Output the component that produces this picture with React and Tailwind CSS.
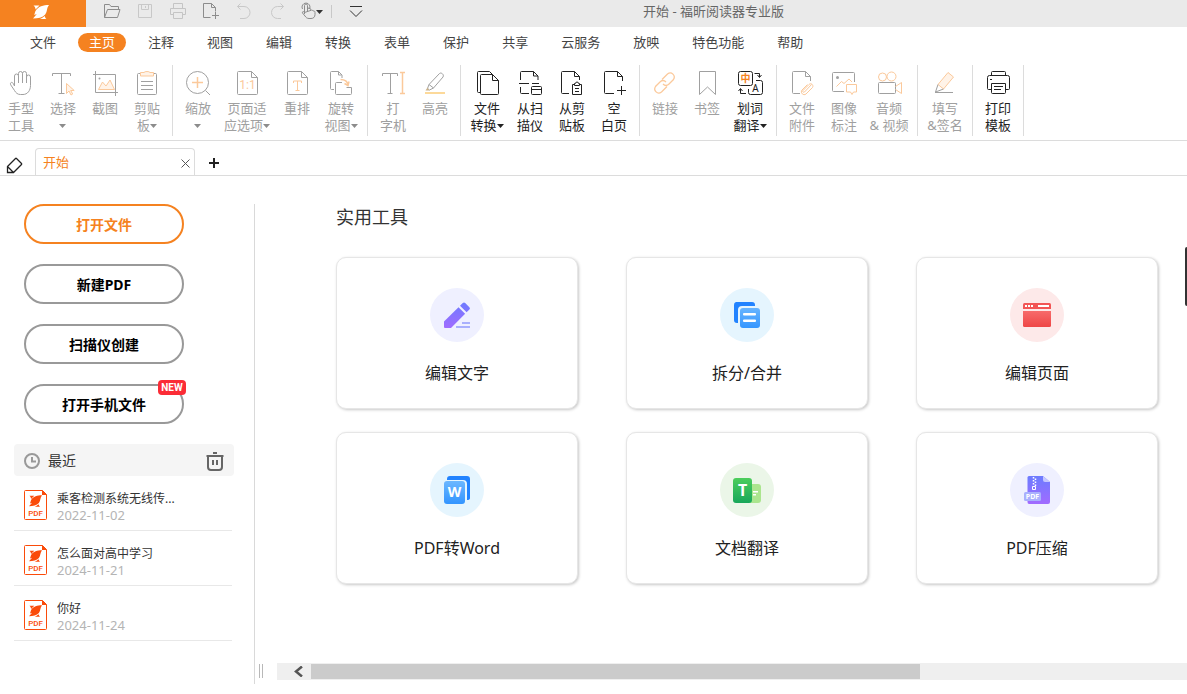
import { useState } from "react";
import clsx from "clsx";

const MENU = ["文件", "主页", "注释", "视图", "编辑", "转换", "表单", "保护", "共享", "云服务", "放映", "特色功能", "帮助"];

const PEACH = "#fbc99b";

// Outline of a sheet with a folded corner
function Sheet() {
  return (
    <>
      <path d="M18.5 2.5h-13a1 1 0 0 0-1 1v21a1 1 0 0 0 1 1h18a1 1 0 0 0 1-1V8.5z" />
      <path d="M18.5 2.5v6h6" />
    </>
  );
}

const ICONS = {
  hand: (
    <path d="M7.5 17V7a2 2 0 0 1 4 0v7m0-7.5v-2a2 2 0 0 1 4 0V14m0-9.5a2 2 0 0 1 4 0V14m0-6a2 2 0 0 1 4 0v8.5c0 5-3 9-7.5 9h-2.5c-3 0-4.5-1.5-6-4L3.7 15.8c-1-2.2 1.3-3.3 2.4-1.5L7.500 17" />
  ),
  select: (
    <>
      <path d="M3.5 7V4.500h18V7M12.500 4.500v20M9.500 24.500h6" />
      <path stroke={PEACH} fill="#fff3e8" d="M17.500 14.500v10l2.500-2.500 2 4 1.700-1-2-3.500h3.500z" />
    </>
  ),
  crop: (
    <>
      <path d="M4.500 2v21.500H27M2 5.500h22.500V27" />
      <path stroke={PEACH} fill="#fff3e8" d="M7.500 20.500l4-7.500 3.500 4 4-6 4.500 9.500z" />
      <circle cx="8.500" cy="9.500" r="1" fill="currentColor" stroke="none" />
    </>
  ),
  clipboard: (
    <>
      <path d="M7 4.500H5.500a1 1 0 0 0-1 1v19a1 1 0 0 0 1 1h17a1 1 0 0 0 1-1v-19a1 1 0 0 0-1-1H21M8 12.500h12M8 16.500h12M8 20.500h12" />
      <path stroke={PEACH} fill="#fff3e8" d="M7.500 3.500H11c.500-1.300 5.500-1.300 6 0h3.500v3.500h-13z" />
    </>
  ),
  zoom: (
    <>
      <circle cx="13.500" cy="13.500" r="11" />
      <path d="M21.500 21.500l4.500 4.500" />
      <path stroke={PEACH} strokeWidth="1.500" d="M13.500 8v11M8 13.500h11" />
    </>
  ),
  fit: (
    <>
      <Sheet />
      <text x="14.500" y="20" fill={PEACH} stroke="none" fontSize="12" textAnchor="middle" className="font-['Roboto']">1:1</text>
    </>
  ),
  reflow: (
    <>
      <Sheet />
      <path stroke={PEACH} d="M10.500 14v-2h8v2M14.500 12v9.500M12.500 21.500h4" />
    </>
  ),
  rotate: (
    <>
      <path d="M7 20.500H4.500a1 1 0 0 1-1-1v-16a1 1 0 0 1 1-1h7l3.500 3.500v3M11.500 2.500V6h3" />
      <path d="M15 13.500H9.500a1 1 0 0 0-1 1v10a1 1 0 0 0 1 1h14a1 1 0 0 0 1-1v-6h-5" />
      <path stroke={PEACH} strokeWidth="1.500" d="M13.500 10.500c4 0 7 1.500 7.500 5.500M17.500 14.500l3.500 2 1-4" />
    </>
  ),
  type: (
    <>
      <path d="M3.500 7V4.500h15V7M11.500 4.500v20M8.500 24.500h5" />
      <path stroke={PEACH} strokeWidth="1.500" d="M21 3.500h5M23.500 3.500v21M21 24.500h5" />
    </>
  ),
  highlight: (
    <>
      <path d="M8 15.500L18.500 4.500c1.500-1.500 5 1 3.500 3.500l-9.500 11zM8 15.500l-1.500 4 2 1.500 4-2" />
      <path fill="#c9b28c" stroke="none" d="M6.500 18.500L4.500 21.500h4z" />
      <path stroke="#fcd99a" strokeWidth="2" d="M4 24h20" />
    </>
  ),
  convert: (
    <>
      <path d="M19.500 5.500h-11a1 1 0 0 0-1 1v18a1 1 0 0 0 1 1h16a1 1 0 0 0 1-1v-13z" />
      <path d="M19.500 5.500v6h6M16.500 2.500l3 3M16.500 2.500h-11a1 1 0 0 0-1 1v19a1 1 0 0 0 1 1h2" />
    </>
  ),
  scanner: (
    <>
      <path d="M4.500 11V3.500a1 1 0 0 1 1-1h12l4.500 4.500v4M17.500 2.500V7H22M3 14.500h10M16 14.500h7M4.500 18v5.500a1 1 0 0 0 1 1H13" />
      <rect x="15.500" y="17.500" width="10" height="8" rx="1" />
      <path d="M15.500 20.500h10" />
    </>
  ),
  fromClip: (
    <>
      <path d="M11 24.500H4.500a1 1 0 0 1-1-1v-20a1 1 0 0 1 1-1h12l5 5V11M16.500 2.500v5h5" />
      <path d="M16 15.500h-1.500v10h9v-10H22M16.500 16.500v-2l1.500-.500c0-1.500 2-1.500 2 0l1.500.500v2zM17 19.500h4M17 22.500h4" />
    </>
  ),
  blank: (
    <>
      <path d="M14 24.500H5.500a1 1 0 0 1-1-1v-20a1 1 0 0 1 1-1h12l5 5V12M17.500 2.500v5h5" />
      <path d="M21.500 17v9M17 21.500h9" />
    </>
  ),
  link: (
    <g stroke={PEACH} strokeWidth="1.300">
      <path d="M11 10.500l5.500-5.500c4-3 8.500 1.500 6 5.500l-5 5c-2 1.500-4 1-5.500-.500" />
      <path d="M16 17.500l-5.500 5.500c-4 3-8.500-1.500-6-5.500l5-5c2-1.500 4-1 5.500.500" />
    </g>
  ),
  bookmark: <path d="M6.500 2.500h16v23l-8-7.500-8 7.500z" />,
  translate: (
    <>
      <rect x="2.500" y="2.500" width="14" height="14" rx="2" />
      <path d="M20 11.500h4.500a2 2 0 0 1 2 2v10a2 2 0 0 1-2 2h-10a2 2 0 0 1-2-2V20" />
      <text x="9.500" y="13" fill="#f58220" stroke="none" fontSize="10" fontWeight="700" textAnchor="middle">中</text>
      <text x="19.500" y="23" fill="currentColor" stroke="none" fontSize="10" textAnchor="middle">A</text>
      <path d="M18.500 4.500h5V8M21.500 6l2 2.500 2-2.500M10 24.500H4.500V20M2.500 22l2-2.500 2 2.500" />
    </>
  ),
  attach: (
    <>
      <path d="M12 24.500H5.500a1 1 0 0 1-1-1v-20a1 1 0 0 1 1-1h12l5 5V12M17.500 2.500v5h5" />
      <path stroke={PEACH} d="M23.500 15.500l-7 7.500c-1 1-2.500-.500-1.500-1.500l6-6c2-2 5 .500 3.500 3l-6.500 6.500c-2.500 2-6-1-4-4l5.500-5.500" />
    </>
  ),
  image: (
    <>
      <path d="M14 22.500H3.500a1 1 0 0 1-1-1v-17a1 1 0 0 1 1-1h20a1 1 0 0 1 1 1V13" />
      <circle cx="7.500" cy="8.500" r="1.500" fill="currentColor" stroke="none" />
      <path stroke={PEACH} d="M6.500 17.500l5-5 2.500 2 5-4.500 3 3" />
      <path stroke={PEACH} d="M16.500 15.500h10v7.500h-3l-1.500 2.500-1.500-2.500h-4z" />
    </>
  ),
  media: (
    <>
      <circle cx="7.500" cy="8" r="4" stroke={PEACH} />
      <circle cx="16.500" cy="7.500" r="4.500" stroke={PEACH} />
      <rect x="3.500" y="13.500" width="17" height="11" rx="1" />
      <path stroke={PEACH} d="M20.500 17.500l6-4v11l-6-4" />
    </>
  ),
  sign: (
    <>
      <path stroke={PEACH} fill="#fff3e8" d="M7 15.500L17 3.500l5.500 4.500L12.500 20z" />
      <path d="M7 15.500l-2.500 7.500 8-3M4 23.500h18" />
    </>
  ),
  print: (
    <>
      <path d="M7.500 6.500v-3a1 1 0 0 1 1-1h12a1 1 0 0 1 1 1v3M7.500 20.500h-3a1 1 0 0 1-1-1v-11a2 2 0 0 1 2-2h18a2 2 0 0 1 2 2v11a1 1 0 0 1-1 1h-3M6 10.500h2" />
      <path d="M7.500 14.500h14v9a1 1 0 0 1-1 1h-12a1 1 0 0 1-1-1zM10 17.500h9M10 20.500h7" />
    </>
  ),
};

const GROUPS = [
  [
    { icon: "hand", lines: ["手型", "工具"], w: "w-[42px]" },
    { icon: "select", lines: ["选择", ""], w: "w-[42px]", menu: true },
    { icon: "crop", lines: ["截图"], w: "w-[42px]" },
    { icon: "clipboard", lines: ["剪贴", "板"], w: "w-[42px]", menu: true },
  ],
  [
    { icon: "zoom", lines: ["缩放", ""], w: "w-[42px]", menu: true },
    { icon: "fit", lines: ["页面适", "应选项"], w: "w-[56px]", menu: true },
    { icon: "reflow", lines: ["重排"], w: "w-[44px]" },
    { icon: "rotate", lines: ["旋转", "视图"], w: "w-[44px]", menu: true },
  ],
  [
    { icon: "type", lines: ["打", "字机"], w: "w-[42px]" },
    { icon: "highlight", lines: ["高亮"], w: "w-[42px]" },
  ],
  [
    { icon: "convert", lines: ["文件", "转换"], w: "w-[44px]", menu: true, on: true },
    { icon: "scanner", lines: ["从扫", "描仪"], w: "w-[42px]", on: true },
    { icon: "fromClip", lines: ["从剪", "贴板"], w: "w-[42px]", on: true },
    { icon: "blank", lines: ["空", "白页"], w: "w-[42px]", on: true },
  ],
  [
    { icon: "link", lines: ["链接"], w: "w-[42px]" },
    { icon: "bookmark", lines: ["书签"], w: "w-[42px]" },
    { icon: "translate", lines: ["划词", "翻译"], w: "w-[44px]", menu: true, on: true },
  ],
  [
    { icon: "attach", lines: ["文件", "附件"], w: "w-[42px]" },
    { icon: "image", lines: ["图像", "标注"], w: "w-[42px]" },
    { icon: "media", lines: ["音频", "& 视频"], w: "w-[48px]" },
  ],
  [{ icon: "sign", lines: ["填写", "&签名"], w: "w-[46px]" }],
  [{ icon: "print", lines: ["打印", "模板"], w: "w-[42px]", on: true }],
];

const QUICK = [
  { label: "打开", tone: "text-[#8c8c8c]", d: "M4.500 17.500v-13h5l1.500 2h7.500v3M4.500 17.500l3-8h12.500l-2.500 8z" },
  { label: "保存", tone: "text-[#c8c8c8]", d: "M5.500 4.500h13v13h-13zM8.500 4.500v5h7v-5M12.500 6v2" },
  { label: "打印", tone: "text-[#c4c4c4]", d: "M7.500 8V3.500h9V8M7.500 14.500h-3v-6h15v6h-3M7.500 12.500h9v6h-9z" },
  { label: "新建", tone: "text-[#8c8c8c]", d: "M11.500 17.500h-7v-14h8l4 4v4M12.500 3.500v4h4M16.500 12v7M13 15.500h7" },
  { label: "撤消", tone: "text-[#c8c8c8]", d: "M8.500 3.500l-3 3 3 3M5.500 6.500h6.500a5.500 5.500 0 0 1 0 12H8" },
  { label: "重做", tone: "text-[#c8c8c8]", d: "M15.500 3.500l3 3-3 3M18.500 6.500h-6a5.500 5.500 0 0 0 0 12H16" },
];

const TOOLS = [
  { label: "编辑文字", icon: "pencil", bg: "bg-[#eff0ff]" },
  { label: "拆分/合并", icon: "split", bg: "bg-[#e5f5fe]" },
  { label: "编辑页面", icon: "page", bg: "bg-[#fde9e9]" },
  { label: "PDF转Word", icon: "word", bg: "bg-[#e5f5fe]" },
  { label: "文档翻译", icon: "doc", bg: "bg-[#ebf6e8]" },
  { label: "PDF压缩", icon: "zip", bg: "bg-[#eff0ff]" },
];

const TOOL_ICONS = {
  pencil: (
    <>
      <path fill="url(#violet)" d="M1 20.500L15.500 6.200l6.600 6.500L8 27H2a1 1 0 0 1-1-1z" />
      <path fill="url(#violet)" d="M17 4.800l2.800-2.800q1.200-1.200 2.400 0l4.200 4.200q1.200 1.200 0 2.400l-2.800 2.700z" />
      <path fill="#a9b0fd" d="M19 21h8v2h-8zM13 25h14v2H13z" />
    </>
  ),
  split: (
    <>
      <path fill="#2283ff" d="M3 1h16a3 3 0 0 1 3 3v1H9a4 4 0 0 0-4 4v13H4a3 3 0 0 1-3-3V4a3 3 0 0 1 2-3z" />
      <rect x="7" y="7" width="20" height="20" rx="3" fill="url(#sky)" />
      <rect x="10" y="12" width="13" height="2.500" rx="1" fill="#fff" />
      <rect x="10" y="18.500" width="13" height="2.500" rx="1" fill="#fff" />
    </>
  ),
  page: (
    <>
      <path fill="#f25555" d="M1.500 2h25q1.500 0 1.500 1.500V8H0V3.500Q0 2 1.500 2z" />
      <path fill="url(#rose)" d="M0 10h28v14.500q0 1.500-1.500 1.500h-25Q0 26 0 24.500z" />
      <path fill="#fff" d="M2 4h2v2H2zM5 4h2v2H5zM8 4h2v2H8zM15 4h11v2H15z" />
    </>
  ),
  word: (
    <>
      <path fill="#2283ff" d="M7 0h17q3 0 3 3v19q0 2-3 2V8q0-4-4-4H4V3q0-3 3-3z" />
      <rect x="1" y="5" width="21" height="23" rx="3" fill="url(#sky)" />
      <text x="11.500" y="21" fill="#fff" fontSize="14" fontWeight="700" textAnchor="middle">W</text>
    </>
  ),
  doc: (
    <>
      <rect x="14" y="8" width="14" height="19" rx="3" fill="#abe58e" />
      <path fill="#fff" d="M20 15h5v1.500h-5zM20 18h3v1.500h-3z" />
      <rect x="0" y="2" width="19" height="25" rx="3" fill="url(#leaf)" />
      <text x="9.500" y="20" fill="#fff" fontSize="16" fontWeight="700" textAnchor="middle">T</text>
    </>
  ),
  zip: (
    <>
      <path fill="url(#violet)" d="M6 0h14l7 6v20q0 2-2 2H6q-1.500 0-1.500-2V1.500Q4.500 0 6 0z" />
      <path fill="#c6c8ff" d="M20 0l7 6h-5q-2 0-2-2z" />
      <path stroke="#fff" strokeWidth="1.500" strokeDasharray="1.500 1.500" fill="none" d="M10.500 1v9M12.500 2.500v9" />
      <path stroke="#fff" fill="none" d="M9.500 10.500h3v3h-3z" />
      <rect x="1" y="16" width="17" height="9" rx="1.500" fill="#a9b0fd" />
      <text x="9.500" y="23" fill="#fff" fontSize="7" fontWeight="700" textAnchor="middle">PDF</text>
    </>
  ),
};

const RECENT = [
  { name: "乘客检测系统无线传...", date: "2022-11-02" },
  { name: "怎么面对高中学习", date: "2024-11-21" },
  { name: "你好", date: "2024-11-24" },
];

const CREATE = ["打开文件", "新建PDF", "扫描仪创建", "打开手机文件"];

function FoxMark() {
  return (
    <g fill="currentColor">
      <path d="M16 0C10.500 0 5 1.500 2.500 6 1.800 7.500 1.800 8.700 1.200 10l2.600-1L0 13.500c5 0 9.500-1 12.200-4C14.500 6.500 13.500 3 16 0z" />
      <path d="M.500.500H6.500L4 3l-1.500 1.500C2.500 2.500 1.500 1.200.500.500zM13.500 14H7l2-1 2.800-2c.200 1.200.700 2.300 1.700 3z" />
    </g>
  );
}

function Caret({ className }) {
  return (
    <svg viewBox="0 0 7 4" className={clsx("inline-block h-1 w-[7px] align-middle", className)} fill="currentColor" aria-hidden="true">
      <path d="M0 0h7L3.500 4z" />
    </svg>
  );
}

function RibbonButton({ item }) {
  return (
    <button
      type="button"
      className={clsx("flex flex-col items-center pt-1", item.w, item.on ? "text-[#222]" : "text-[#a0a0a0]")}
    >
      <svg viewBox="0 0 28 28" className="h-7 w-7" fill="none" stroke="currentColor" aria-hidden="true">
        {ICONS[item.icon]}
      </svg>
      <span className="mt-[3px] text-[13px] leading-[17px] whitespace-nowrap">
        {item.lines.map((line, i) => (
          <span key={i} className="block">
            {line}
            {item.menu && i === item.lines.length - 1 ? (
              <Caret className={clsx("mb-[2px]", !item.on && "text-[#8c8c8c]")} />
            ) : null}
          </span>
        ))}
      </span>
    </button>
  );
}

function TitleBar() {
  return (
    <header className="flex h-[27px] bg-[#eaeaea]">
      <div className="flex w-[86px] shrink-0 justify-center bg-[#f58220] pt-[5px] pr-[5px] text-white">
        <svg viewBox="0 0 16 14" className="h-[14px] w-4" aria-hidden="true">
          <FoxMark />
        </svg>
      </div>
      <div className="flex shrink-0 items-start pl-[9px]">
        {QUICK.map((q) => (
          <button key={q.label} type="button" aria-label={q.label} className={clsx("flex w-[33px] justify-center", q.tone)}>
            <svg viewBox="0 0 24 24" className="h-6 w-6" fill="none" stroke="currentColor" aria-hidden="true">
              <path d={q.d} />
            </svg>
          </button>
        ))}
        <button type="button" aria-label="触摸模式" className="flex h-6 items-center pl-[3px] text-[#8c8c8c]">
          <svg viewBox="0 0 24 24" className="h-6 w-6" fill="none" stroke="currentColor" aria-hidden="true">
            <path d="M8.500 14V5.500a1.500 1.500 0 0 1 3 0V11m0-1.500a1.500 1.500 0 0 1 3 0V11m0-.500a1.500 1.500 0 0 1 2.500.500c1.500-.500 2 .500 2 1.500v2c0 2.500-1.500 4-4 4h-2c-2 0-3-1-4-2.500l-2.500-3c-.500-1.500 1-2 2-.500zM6.500 9a4 4 0 1 1 7 0" />
          </svg>
          <Caret className="-ml-1 text-[#333]" />
        </button>
        <span className="mt-[5px] mr-[10px] ml-2 h-[13px] w-px bg-[#c8c8c8]" />
        <button type="button" aria-label="自定义" className="flex w-7 justify-center text-[#333]">
          <svg viewBox="0 0 24 24" className="h-6 w-6" fill="none" stroke="currentColor" aria-hidden="true">
            <path d="M6 6.500h12M6 10.500l6 6 6-6" />
          </svg>
        </button>
      </div>
      <h1 className="flex-1 pr-[130px] text-center text-[13px] leading-[23px] text-[#666]">开始 - 福昕阅读器专业版</h1>
    </header>
  );
}

function Sidebar() {
  return (
    <aside className="w-[255px] shrink-0 border-r border-[#d9d9d9] pl-[14px]">
      <div className="flex flex-col gap-5 pl-[10px]">
        {CREATE.map((label, i) => (
          <button
            key={label}
            type="button"
            className={clsx(
              "relative h-10 w-40 rounded-full border-2 text-[14px] font-bold",
              i === 0 ? "border-[#f58220] text-[#f58220]" : "border-[#999] text-black",
            )}
          >
            {label}
            {i === 3 ? (
              <span className="absolute -top-[6px] -right-1 h-[15px] w-7 rounded-sm bg-[#fb2c36] font-['Roboto'] text-[10px] leading-[15px] text-white">
                NEW
              </span>
            ) : null}
          </button>
        ))}
      </div>
      <div className="mt-5 flex h-8 w-[220px] items-center rounded bg-[#f5f5f5] pt-px pr-[9px] pl-[10px]">
        <svg viewBox="0 0 16 16" className="h-4 w-4 text-[#999]" fill="none" stroke="currentColor" strokeWidth="2" aria-hidden="true">
          <circle cx="8" cy="8" r="7" />
          <path d="M8 4v4.500h4" />
        </svg>
        <h2 className="ml-2 flex-1 text-[14px] text-[#333]">最近</h2>
        <button type="button" aria-label="清空">
          <svg viewBox="0 0 20 20" className="h-5 w-5 text-[#666]" fill="none" stroke="currentColor" strokeWidth="2" aria-hidden="true">
            <path d="M1.500 5h17M8 2h4M3 5v11q0 3 3 3h8q3 0 3-3V5M8 9v5M12 9v5" />
          </svg>
        </button>
      </div>
      <ul className="w-[218px]">
        {RECENT.map((file) => (
          <li key={file.name} className="border-b border-[#e8e8e8]">
            <a href="#recent" className="flex h-[54px] items-center gap-[10px] pt-1 pl-[10px]">
              <svg viewBox="0 0 23 30" className="h-[30px] w-[23px] shrink-0 text-[#fa4b0a]" aria-hidden="true">
                <path fill="#fff" stroke="currentColor" d="M18.500.500h-17a1 1 0 0 0-1 1v27a1 1 0 0 0 1 1h20a1 1 0 0 0 1-1V4.500z" />
                <path fill="currentColor" d="M18 0v5h5z" />
                <svg x="5" y="5" width="13" height="12" viewBox="0 0 16 14">
                  <FoxMark />
                </svg>
                <text x="11.500" y="26" fill="currentColor" fontSize="8" textAnchor="middle" className="font-['Roboto'] font-medium">PDF</text>
              </svg>
              <span className="min-w-0 pt-1">
                <span className="block truncate text-[12px] leading-4 text-[#333]">{file.name}</span>
                <span className="block text-[13px] leading-4 text-[#b4b4b4]">{file.date}</span>
              </span>
            </a>
          </li>
        ))}
      </ul>
    </aside>
  );
}

function ToolCard({ tool }) {
  return (
    <button
      type="button"
      className="flex h-[152px] flex-col items-center rounded-[10px] border border-[#e6e6e6] bg-white pt-[30px] shadow-[1px_1px_3px_rgba(0,0,0,0.22)]"
    >
      <span className={clsx("flex h-[54px] w-[54px] items-center justify-center rounded-full", tool.bg)}>
        <svg viewBox="0 0 28 28" className="h-7 w-7" aria-hidden="true">
          {TOOL_ICONS[tool.icon]}
        </svg>
      </span>
      <span className="mt-5 text-[16px] leading-[22px] text-[#222]">{tool.label}</span>
    </button>
  );
}

function Gradients() {
  const stops = [
    ["violet", "#6f7bff", "#a06bff"],
    ["sky", "#74bcff", "#3596ff"],
    ["rose", "#fb7d7d", "#ee4444"],
    ["leaf", "#4ccd5c", "#18a75a"],
  ];
  return (
    <svg className="absolute h-0 w-0" aria-hidden="true">
      <defs>
        {stops.map(([id, from, to]) => (
          <linearGradient key={id} id={id} gradientUnits="userSpaceOnUse" x1="0" y1="2" x2="0" y2="27">
            <stop stopColor={from} />
            <stop offset="1" stopColor={to} />
          </linearGradient>
        ))}
      </defs>
    </svg>
  );
}

export default function App() {
  const [active, setActive] = useState("主页");

  return (
    <div className="relative flex min-h-screen flex-col overflow-hidden bg-white font-['Noto_Sans','Noto_Sans_CJK_SC',sans-serif]">
      <Gradients />
      <TitleBar />

      <nav className="flex h-[33px] items-center gap-[11px] pb-[2px] pl-[19px]">
        {MENU.map((name) => (
          <button
            key={name}
            type="button"
            onClick={() => setActive(name)}
            className={clsx(
              "h-[19px] rounded-full px-[11px] text-[13px] leading-[19px] whitespace-nowrap",
              name === active ? "bg-[#f58220] text-white" : "text-[#444]",
            )}
          >
            {name}
          </button>
        ))}
      </nav>

      <div className="flex h-[81px] border-b border-[#dcdcdc] pt-[5px]">
        {GROUPS.map((group, i) => (
          <div key={i} className={clsx("flex h-[71px] border-r border-[#dcdcdc] pr-1", i > 0 && "pl-1")}>
            {group.map((item) => (
              <RibbonButton key={item.icon} item={item} />
            ))}
          </div>
        ))}
      </div>

      <div className="flex h-[35px] items-end border-b border-[#dcdcdc]">
        <button type="button" aria-label="橡皮擦" className="flex w-[35px] pl-[6px]">
          <svg viewBox="0 0 18 18" className="h-[18px] w-[18px] text-[#222]" fill="none" stroke="currentColor" strokeWidth="1.300" aria-hidden="true">
            <path d="M1.500 9.500l8-8q.500-.500 1 0l5 5q.500.500 0 1l-8 8h-6zM1.500 9.500l6 6" />
          </svg>
        </button>
        <div className="flex h-[27px] w-40 items-center justify-between rounded-t border border-b-0 border-[#dcdcdc] pt-[2px] pr-1 pl-[7px]">
          <button type="button" className="text-[13px] text-[#f58220]">开始</button>
          <button type="button" aria-label="关闭标签">
            <svg viewBox="0 0 9 9" className="h-[9px] w-[9px] text-[#555]" stroke="currentColor" aria-hidden="true">
              <path d="M.500.500l8 8M8.500.500l-8 8" />
            </svg>
          </button>
        </div>
        <button type="button" aria-label="新标签" className="flex h-[27px] items-center pt-[2px] pl-[14px]">
          <svg viewBox="0 0 10 10" className="h-[10px] w-[10px] text-[#222]" stroke="currentColor" strokeWidth="2" aria-hidden="true">
            <path d="M5 0v10M0 5h10" />
          </svg>
        </button>
      </div>

      <div className="flex flex-1 pt-7 pb-[10px]">
        <Sidebar />
        <div className="flex w-[22px] shrink-0 items-end pb-[6px] pl-1">
          <span className="h-[14px] w-1 border-x border-[#b8b8b8]" />
        </div>
        <main className="flex min-w-0 flex-1 flex-col">
          <section className="flex-1 overflow-hidden pl-[59px]">
            <h2 className="text-[18px] leading-[26px] text-[#333]">实用工具</h2>
            <div className="grid grid-cols-[repeat(3,242px)] gap-x-12 gap-y-[23px] pt-[27px]">
              {TOOLS.map((tool) => (
                <ToolCard key={tool.icon} tool={tool} />
              ))}
            </div>
          </section>
          <div className="mb-1 flex h-[17px] items-center bg-[#efefef]">
            <button type="button" aria-label="向左滚动" className="flex w-[34px] justify-center pl-2">
              <svg viewBox="0 0 9 11" className="h-[11px] w-[9px] text-[#555]" fill="none" stroke="currentColor" strokeWidth="2.500" aria-hidden="true">
                <path d="M8 .500l-6 5 6 5" />
              </svg>
            </button>
            <div className="h-[15px] flex-1">
              <div className="h-full w-[69.5%] bg-[#cbcbcb]" />
            </div>
          </div>
        </main>
      </div>

      <div className="absolute top-[247px] right-0 h-[59px] w-[2px] rounded-l bg-[#333]" />
    </div>
  );
}
